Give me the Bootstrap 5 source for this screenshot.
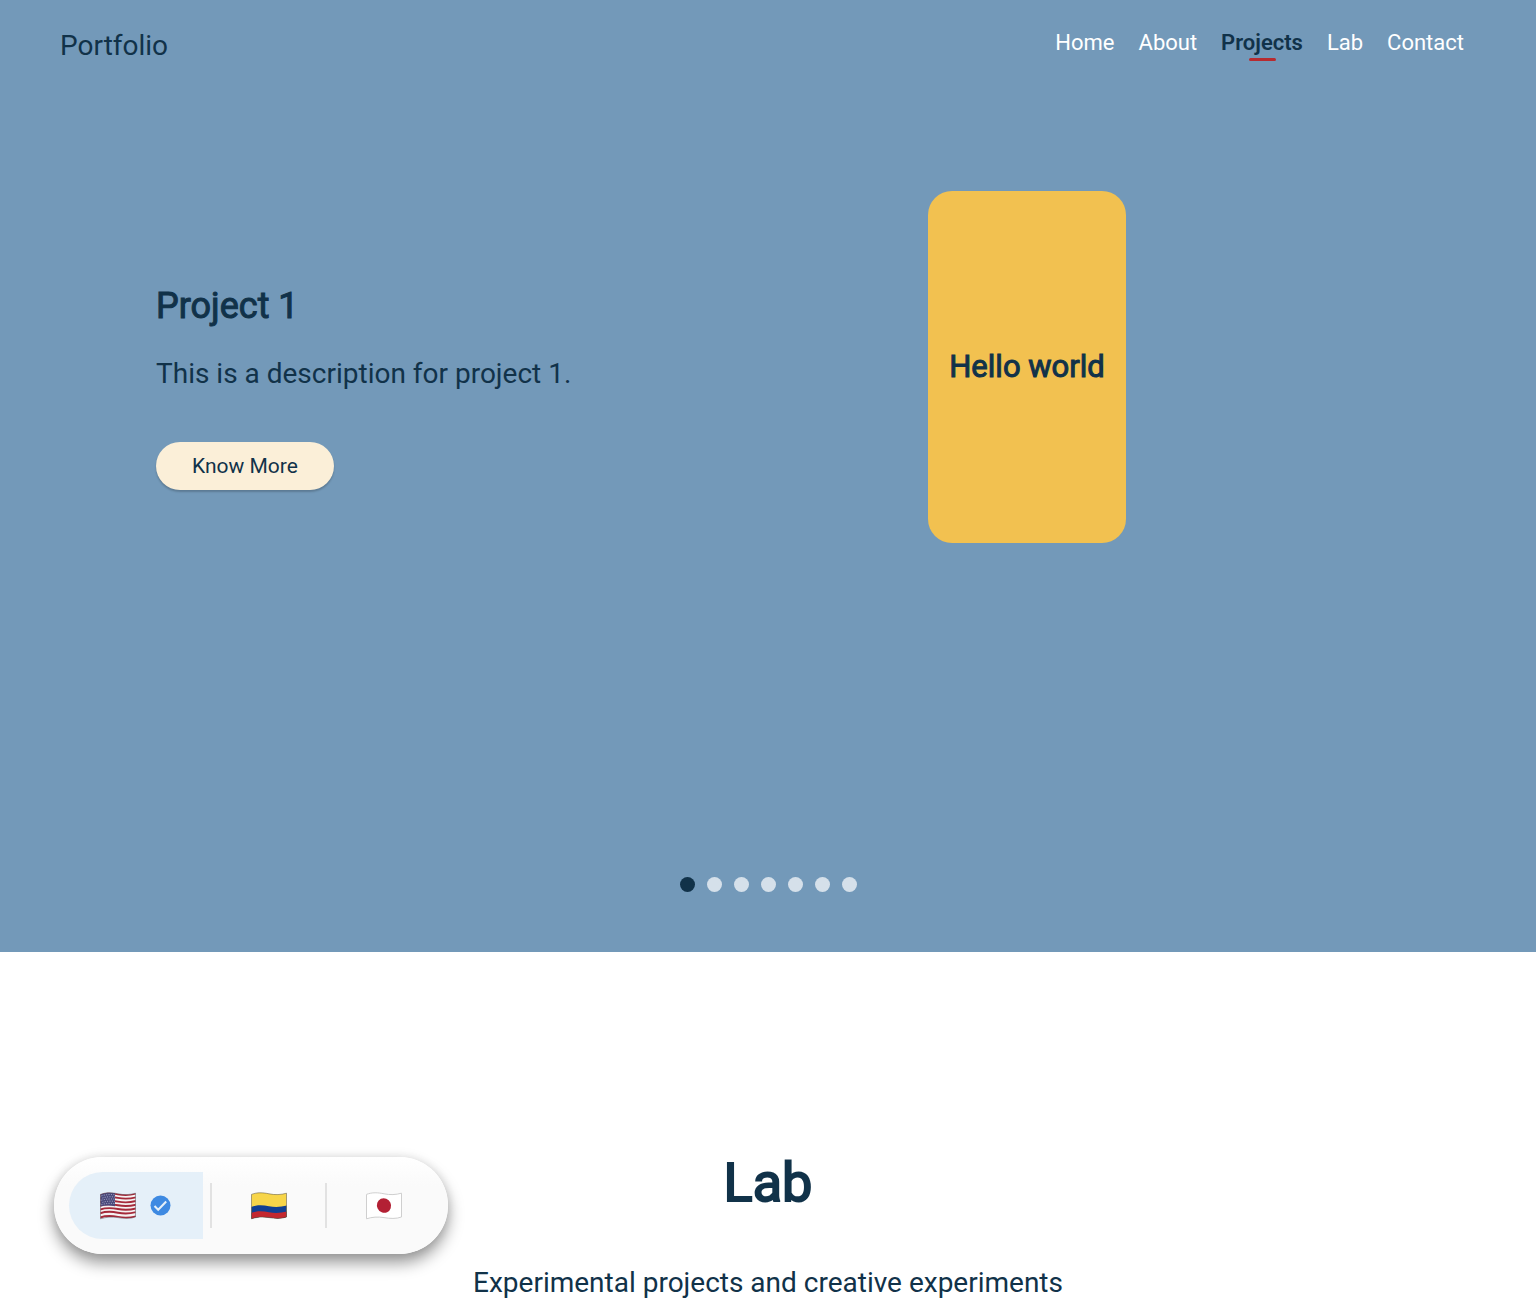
<!DOCTYPE html>
<html lang="en">
<head>
<meta charset="utf-8">
<meta name="viewport" content="width=device-width, initial-scale=1">
<title>Portfolio</title>
<link rel="stylesheet" href="https://cdn.jsdelivr.net/npm/bootstrap@5.3.0/dist/css/bootstrap.min.css">
<style>
  :root { --navy: #113249; --sky: #7399b9; }
  body { font-family: Roboto, "Liberation Sans", sans-serif; color: var(--navy); overflow-x: hidden; }
  .hero { background: var(--sky); padding-bottom: 60px; }
  .site-nav { padding: 24px 60px 22px; }
  .site-nav .navbar-brand { font-size: 28px; line-height: 44px; padding: 0; margin: 0; color: var(--navy); }
  .site-menu { gap: 24px; padding-right: 12px; }
  .site-nav .site-menu .nav-link { font-size: 22px; line-height: 38px; padding: 0; color: #fff; position: relative; }
  .site-nav .site-menu .nav-link.active { color: var(--navy); font-weight: 600; }
  .site-menu .nav-link.active::after { content: ""; position: absolute; left: 50%; bottom: 1px; width: 27px; height: 3px; margin-left: -13px; border-radius: 2px; background: #b72b30; }
  .slide { padding-top: 101px; }
  .slide-text { padding-left: 156px; padding-top: 38px; }
  .heavy { font-weight: 400; -webkit-text-stroke: 1px currentColor; }
  .slide-title { font-size: 36px; line-height: 48px; margin-bottom: 24px; }
  .body-copy { font-size: 28px; line-height: 40px; }
  .slide-visual { padding-right: 250px; }
  .demo-card { width: 198px; height: 352px; border-radius: 24px; background: #f2c150; font-size: 31px; }
  .btn-cream { --bs-btn-bg: #fbefd8; --bs-btn-hover-bg: #f5e6c8; --bs-btn-color: var(--navy); --bs-btn-border-width: 0; font-size: 21px; line-height: 24px; padding: 12px 36px; box-shadow: 0 2px 2px rgba(0,0,0,.2); }
  .pager { padding-top: 334px; gap: 12px; }
  .pager button { width: 15px; height: 15px; background: #d5e0ea; }
  .pager button.current { background: var(--navy); }
  .lab { padding: 195px 24px 60px; }
  .lab-title { font-size: 54px; line-height: 72px; margin-bottom: 44px; -webkit-text-stroke-width: 2px; }
  .lang-switch { left: 54px; bottom: 54px; height: 97px; padding: 15px; background: linear-gradient(#fff, #fafafa 30%); box-shadow: 0 9px 16px rgba(0,0,0,.4), 0 0 12px rgba(0,0,0,.1); }
  .lang-switch button { width: 99px; height: 67px; background: none; }
  .lang-switch button.chosen { width: 134px; gap: 14px; padding-right: 2px !important; background: #e5f0f9; border-radius: 34px 0 0 34px; }
  .lang-rule { width: 2px; height: 45px; margin: 0 7px; background: #e2e2e2; }
</style>
<script defer src="https://cdn.jsdelivr.net/npm/bootstrap@5.3.0/dist/js/bootstrap.bundle.min.js"></script>
</head>
<body>
<section class="hero">
  <nav class="navbar navbar-expand site-nav justify-content-between align-items-start">
    <a class="navbar-brand" href="#">Portfolio</a>
    <div class="navbar-nav site-menu">
      <a class="nav-link" href="#home">Home</a>
      <a class="nav-link" href="#about">About</a>
      <a class="nav-link active" aria-current="page" href="#projects">Projects</a>
      <a class="nav-link" href="#lab">Lab</a>
      <a class="nav-link" href="#contact">Contact</a>
    </div>
  </nav>
  <div class="row g-0 align-items-center slide" id="projects">
    <div class="col-6 slide-text">
      <h2 class="slide-title heavy">Project 1</h2>
      <p class="body-copy mb-5">This is a description for project 1.</p>
      <button type="button" class="btn btn-cream rounded-pill">Know More</button>
    </div>
    <div class="col-6 slide-visual d-flex justify-content-center">
      <div class="demo-card heavy d-flex align-items-center justify-content-center text-nowrap">Hello world</div>
    </div>
  </div>
  <div class="pager d-flex justify-content-center">
    <button type="button" class="current border-0 p-0 rounded-circle" aria-label="Project 1" aria-current="true"></button>
    <button type="button" class="border-0 p-0 rounded-circle" aria-label="Project 2"></button>
    <button type="button" class="border-0 p-0 rounded-circle" aria-label="Project 3"></button>
    <button type="button" class="border-0 p-0 rounded-circle" aria-label="Project 4"></button>
    <button type="button" class="border-0 p-0 rounded-circle" aria-label="Project 5"></button>
    <button type="button" class="border-0 p-0 rounded-circle" aria-label="Project 6"></button>
    <button type="button" class="border-0 p-0 rounded-circle" aria-label="Project 7"></button>
  </div>
</section>

<section class="lab text-center" id="lab">
  <h2 class="heavy lab-title">Lab</h2>
  <p class="body-copy mb-0">Experimental projects and creative experiments</p>
</section>

<div class="lang-switch position-fixed d-flex align-items-center rounded-pill" role="group" aria-label="Language">
  <button type="button" class="chosen border-0 p-0 d-flex align-items-center justify-content-center" aria-label="English" aria-pressed="true">
    <svg width="36" height="28" viewBox="0 0 36 28" aria-hidden="true">
      <defs><clipPath id="wave"><path d="M.5 2.400C6 .2 12 .5 18 1.800S30 2.800 35.500 1.200V25C30 27 24 26.600 18 25.600S6 25 .5 26.800Z"/></clipPath></defs>
      <g clip-path="url(#wave)">
        <path fill="#f5f2f2" d="M0 0h36v28H0z"/>
        <g fill="none" stroke="#a52a3b" stroke-width="1.900">
          <path d="M0 2.800C6 .7 12 1 18 2.200S30 3.200 36 1.600"/>
          <path d="M0 6.500C6 4.400 12 4.700 18 5.900S30 6.900 36 5.300"/>
          <path d="M0 10.200C6 8.100 12 8.400 18 9.600S30 10.600 36 9"/>
          <path d="M0 13.900C6 11.800 12 12.100 18 13.300S30 14.300 36 12.700"/>
          <path d="M0 17.600C6 15.500 12 15.800 18 17S30 18 36 16.400"/>
          <path d="M0 21.300C6 19.200 12 19.500 18 20.700S30 21.700 36 20.100"/>
          <path d="M0 25.500C6 23.400 12 23.700 18 24.900S30 25.900 36 24.300"/>
        </g>
        <path fill="#4b4a7c" d="M0 0h15v14.200Q7 12.600 0 14.600Z"/>
        <g stroke="#c9c8dc" stroke-width=".9" stroke-dasharray=".9 1.500" fill="none">
          <path d="M1.500 3.800Q8 2 15 2.800M2.500 6Q8 4.200 15 5M1.500 8.200Q8 6.400 15 7.200M2.500 10.400Q8 8.600 15 9.400M1.500 12.600Q8 10.800 15 11.600"/>
        </g>
      </g>
      <path fill="none" stroke="#53404a" stroke-opacity=".6" stroke-width=".8" d="M.5 2.400C6 .2 12 .5 18 1.800S30 2.800 35.500 1.200V25C30 27 24 26.600 18 25.600S6 25 .5 26.800Z"/>
    </svg>
    <svg width="21" height="21" viewBox="0 0 21 21" aria-hidden="true">
      <circle cx="10.500" cy="10.500" r="10" fill="#3e8ae2"/>
      <path d="m4.500 11 3.700 3.800 8-8.300" fill="none" stroke="#e5f0f9" stroke-width="2"/>
    </svg>
  </button>
  <span class="lang-rule"></span>
  <button type="button" class="border-0 p-0 d-flex align-items-center justify-content-center" aria-label="Español" aria-pressed="false">
    <svg width="36" height="28" viewBox="0 0 36 28" aria-hidden="true">
      <g clip-path="url(#wave)">
        <path fill="#f7d549" d="M0 0h36v28H0z"/>
        <path fill="#103f92" d="M0 15C6 12.500 12 13 18 14.200S30 15 36 13.500V28H0Z"/>
        <path fill="#c3272f" d="M0 21C6 18.500 12 19 18 20.200S30 21 36 19.500V28H0Z"/>
      </g>
      <path fill="none" stroke="#4a4435" stroke-opacity=".6" stroke-width=".8" d="M.5 2.400C6 .2 12 .5 18 1.800S30 2.800 35.500 1.200V25C30 27 24 26.600 18 25.600S6 25 .5 26.800Z"/>
    </svg>
  </button>
  <span class="lang-rule"></span>
  <button type="button" class="border-0 p-0 d-flex align-items-center justify-content-center" aria-label="日本語" aria-pressed="false">
    <svg width="36" height="28" viewBox="0 0 36 28" aria-hidden="true">
      <path fill="#fff" stroke="#cfcfcf" stroke-width="1" d="M.5 2.400C6 .2 12 .5 18 1.800S30 2.800 35.500 1.200V25C30 27 24 26.600 18 25.600S6 25 .5 26.800Z"/>
      <ellipse cx="18" cy="13.500" rx="7" ry="7.400" transform="rotate(-25 18 13.500)" fill="#b32034"/>
    </svg>
  </button>
</div>
</body>
</html>
